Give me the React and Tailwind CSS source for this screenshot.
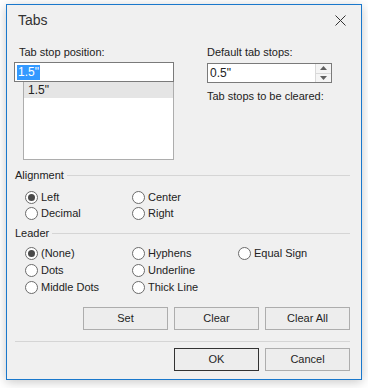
import React, { useState } from 'react';

const Radio = ({ label, checked, onClick, width }) => (
  <div
    onClick={onClick}
    className={`flex items-center h-full cursor-default ${width || ''}`}
  >
    <span className="w-[13px] h-[13px] rounded-full border border-[#6b6b6b] bg-white flex items-center justify-center shrink-0">
      {checked && <span className="w-[7px] h-[7px] rounded-full bg-[#4a4a4a]" />}
    </span>
    <span className="ml-[3px] leading-none">{label}</span>
  </div>
);

const Btn = ({ children, primary }) => (
  <button
    type="button"
    className={`w-[85px] h-[23px] bg-[#ededed] border ${
      primary ? 'border-[#333333]' : 'border-[#adadad]'
    } text-[11px] text-[#1f1f1f] leading-none`}
  >
    {children}
  </button>
);

const GroupHeader = ({ title }) => (
  <div className="flex items-center h-[16px] pl-[1px] gap-[3px]">
    <span>{title}</span>
    <div className="flex-1 h-px bg-[#d5d5d5]" />
  </div>
);

export default function App() {
  const [align, setAlign] = useState('Left');
  const [leader, setLeader] = useState('(None)');

  return (
    <div className="w-[368px] h-[388px] bg-white pl-[6px] pt-[4px] font-['Liberation_Sans',Arial,sans-serif] text-[11px] text-[#222222]">
      <div className="w-[356px] h-[376px] border border-[#1a78cc] bg-[#f0f0f0] shadow-[0_2px_10px_rgba(0,0,0,0.22)] flex flex-col">
        {/* Barre de titre */}
        <div className="h-[30px] flex items-center justify-between pl-[11px] pr-[15px]">
          <span className="text-[14px] text-[#333333]">Tabs</span>
          <svg width="11" height="11" viewBox="0 0 11 11" className="text-[#333333]">
            <path d="M0.5 0.5 L10.5 10.5 M10.5 0.5 L0.5 10.5" stroke="currentColor" strokeWidth="1" />
          </svg>
        </div>

        <div className="pl-[7px] pr-[11px] pt-[9px] flex flex-col">
          {/* Positions */}
          <div className="flex">
            <div className="w-[160px] flex flex-col">
              <div className="h-[16px] leading-[16px] pl-[5px]">Tab stop position:</div>
              <div className="mt-[2px] h-[20px] bg-white border border-[#7a7a7a] flex items-center pl-[2px]">
                <span className="bg-[#3399ff] text-white h-[15px] leading-[15px] px-[1px] text-[12px]">1.5"</span>
              </div>
              <div className="ml-[9px] w-[151px] h-[78px] bg-white border border-t-0 border-[#adadad]">
                <div className="h-[16px] leading-[16px] bg-[#e5e5e5] pl-[4px] text-[12px]">1.5"</div>
              </div>
            </div>

            <div className="ml-[33px] flex flex-col">
              <div className="h-[16px] leading-[16px]">Default tab stops:</div>
              <div className="mt-[3px] w-[125px] h-[20px] bg-white border border-[#7a7a7a] flex">
                <div className="flex-1 flex items-center pl-[2px] text-[12px]">0.5"</div>
                <div className="w-[16px] flex flex-col border-l border-[#d9d9d9]">
                  <div className="flex-1 flex items-center justify-center bg-[#f5f5f5] border-b border-[#d9d9d9]">
                    <svg width="7" height="4" viewBox="0 0 7 4">
                      <path d="M0 4 L3.5 0 L7 4 Z" fill="#606060" />
                    </svg>
                  </div>
                  <div className="flex-1 flex items-center justify-center bg-[#f5f5f5]">
                    <svg width="7" height="4" viewBox="0 0 7 4">
                      <path d="M0 0 L3.5 4 L7 0 Z" fill="#606060" />
                    </svg>
                  </div>
                </div>
              </div>
              <div className="mt-[5px] h-[16px] leading-[16px]">Tab stops to be cleared:</div>
            </div>
          </div>

          {/* Alignement */}
          <div className="mt-[7px]">
            <GroupHeader title="Alignment" />
          </div>
          <div className="mt-[6px] pl-[11px] flex flex-col">
            <div className="flex h-[16px]">
              <Radio width="w-[107px]" label="Left" checked={align === 'Left'} onClick={() => setAlign('Left')} />
              <Radio label="Center" checked={align === 'Center'} onClick={() => setAlign('Center')} />
            </div>
            <div className="flex h-[16px]">
              <Radio width="w-[107px]" label="Decimal" checked={align === 'Decimal'} onClick={() => setAlign('Decimal')} />
              <Radio label="Right" checked={align === 'Right'} onClick={() => setAlign('Right')} />
            </div>
          </div>

          {/* Points de suite */}
          <div className="mt-[4px]">
            <GroupHeader title="Leader" />
          </div>
          <div className="mt-[4px] pl-[11px] flex flex-col">
            <div className="flex h-[17px]">
              <Radio width="w-[107px]" label="(None)" checked={leader === '(None)'} onClick={() => setLeader('(None)')} />
              <Radio width="w-[106px]" label="Hyphens" checked={leader === 'Hyphens'} onClick={() => setLeader('Hyphens')} />
              <Radio label="Equal Sign" checked={leader === 'Equal Sign'} onClick={() => setLeader('Equal Sign')} />
            </div>
            <div className="flex h-[17px]">
              <Radio width="w-[107px]" label="Dots" checked={leader === 'Dots'} onClick={() => setLeader('Dots')} />
              <Radio label="Underline" checked={leader === 'Underline'} onClick={() => setLeader('Underline')} />
            </div>
            <div className="flex h-[17px]">
              <Radio width="w-[107px]" label="Middle Dots" checked={leader === 'Middle Dots'} onClick={() => setLeader('Middle Dots')} />
              <Radio label="Thick Line" checked={leader === 'Thick Line'} onClick={() => setLeader('Thick Line')} />
            </div>
          </div>

          {/* Boutons */}
          <div className="mt-[11px] flex justify-end gap-[6px]">
            <Btn>Set</Btn>
            <Btn>Clear</Btn>
            <Btn>Clear All</Btn>
          </div>
          <div className="mt-[11px] ml-[1px] h-px bg-[#d5d5d5]" />
          <div className="mt-[6px] flex justify-end gap-[6px]">
            <Btn primary>OK</Btn>
            <Btn>Cancel</Btn>
          </div>
        </div>
      </div>
    </div>
  );
}
